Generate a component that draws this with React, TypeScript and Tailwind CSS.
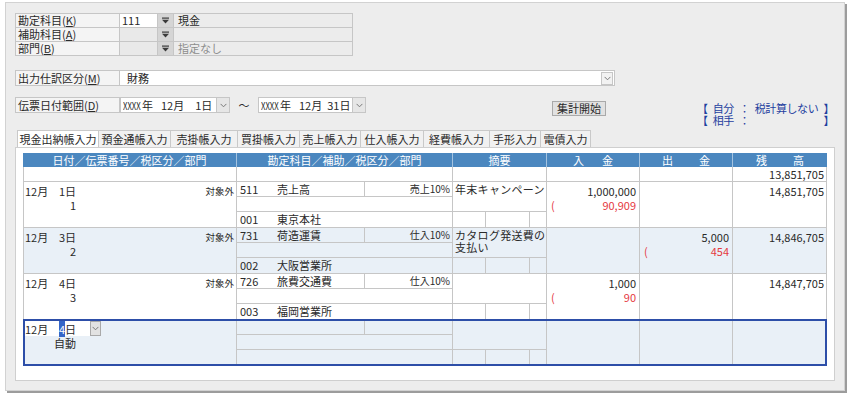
import React from "react";

const FONT = "font-['Noto_Sans_CJK_JP','Noto_Sans',sans-serif]";
const LINE = "border-[#c6c6c6]";

function BarDown() {
  return (
    <svg width="7" height="7" viewBox="0 0 7 7">
      <rect x="0" y="0.5" width="7" height="1.2" fill="#3a3a3a" />
      <path d="M0 2.8H7L3.5 6.6Z" fill="#3a3a3a" />
    </svg>
  );
}

function Chev() {
  return (
    <svg width="7" height="5" viewBox="0 0 7 5">
      <path d="M0.6 0.9L3.5 3.8L6.4 0.9" fill="none" stroke="#7a7a7a" strokeWidth="1" />
    </svg>
  );
}

function U({ c }: { c: string }) {
  return <span className="underline underline-offset-[1px]">{c}</span>;
}

function TopRow({
  label,
  code,
  codeWhite,
  name,
  grey,
  last,
}: {
  label: React.ReactNode;
  code: string;
  codeWhite?: boolean;
  name: string;
  grey?: boolean;
  last?: boolean;
}) {
  return (
    <div className={`flex ${last ? "h-[13px]" : "h-[14px] border-b"} ${LINE} leading-[13px]`}>
      <div className={`w-[104px] bg-[#f4f4f4] border-r ${LINE} pl-[2px]`}>{label}</div>
      <div className={`w-[38px] border-r ${LINE} pl-[2px] ${codeWhite ? "bg-white" : "bg-[#e9e9e9]"}`}>{code}</div>
      <div className={`w-[16px] bg-[#d5d5d5] border-r ${LINE} flex items-center justify-center`}>
        <BarDown />
      </div>
      <div className={`flex-1 bg-[#ececec] pl-[4px] ${grey ? "text-[#8c8c8c]" : ""}`}>{name}</div>
    </div>
  );
}

function DateCombo({ day, w }: { day: string; w: string }) {
  return (
    <div className="flex h-[16px]">
      <div className={`${w} h-[16px] bg-white border ${LINE} pl-[2px] leading-[14px] whitespace-nowrap flex`}>
        <span className="inline-block w-[19px] origin-left scale-x-70">XXXX</span>
        <span>年</span>
        <span className="ml-[8px]">12月</span>
        <span className={day.length > 2 ? "ml-[5px]" : "ml-[11px]"}>{day}</span>
      </div>
      <div className={`w-[13px] h-[16px] bg-[#e6e6e6] border-y border-r ${LINE} flex items-center justify-center`}>
        <Chev />
      </div>
    </div>
  );
}

const tabs: [string, number][] = [
  ["現金出納帳入力", 82],
  ["預金通帳入力", 72],
  ["売掛帳入力", 67],
  ["買掛帳入力", 62],
  ["売上帳入力", 61],
  ["仕入帳入力", 63],
  ["経費帳入力", 66],
  ["手形入力", 51],
  ["電債入力", 50],
];

function Amt({ amt, tax, w }: { amt?: string; tax?: string; w: string }) {
  return (
    <div className={`${w} border-r ${LINE} flex flex-col leading-[14px] pt-[2px]`}>
      <div className="h-[14px] text-right pr-[3px]">{amt}</div>
      {tax && (
        <div className="h-[14px] flex justify-between pl-[4px] pr-[3px] text-[#e5393f]">
          <span>(</span>
          <span>{tax}</span>
        </div>
      )}
    </div>
  );
}

type Entry = {
  bg: string;
  dateCol: React.ReactNode;
  code?: string;
  name?: string;
  tax?: string;
  subCode?: string;
  subName?: string;
  memo?: string;
  inAmt?: string;
  inTax?: string;
  outAmt?: string;
  outTax?: string;
  bal?: string;
  active?: boolean;
};

function EntryRow(e: Entry) {
  return (
    <div className={`relative flex h-[46px] border-b ${LINE} ${e.bg}`}>
      <div className={`w-[213px] border-r ${LINE} flex flex-col`}>{e.dateCol}</div>
      <div className={`w-[216px] border-r ${LINE} flex flex-col leading-[14px]`}>
        <div className={`h-[15px] flex border-b ${LINE}`}>
          <div className={`w-[128px] border-r ${LINE} flex`}>
            <span className="w-[40px] pl-[3px]">{e.code}</span>
            <span>{e.name}</span>
          </div>
          <div className="flex-1 text-right pr-[2px] text-[10px]">{e.tax}</div>
        </div>
        <div className={`h-[15px] border-b ${LINE}`} />
        <div className="flex-1 flex">
          <span className="w-[40px] pl-[3px]">{e.subCode}</span>
          <span>{e.subName}</span>
        </div>
      </div>
      <div className={`w-[94px] border-r ${LINE} flex flex-col`}>
        <div className={`h-[30px] border-b ${LINE} pl-[2px] pt-[1px] leading-[12px] tracking-[0.3px]`}>{e.memo}</div>
        <div className="flex-1 flex">
          <div className={`w-[33px] border-r ${LINE}`} />
          <div className={`w-[44px] border-r ${LINE}`} />
          <div className="flex-1" />
        </div>
      </div>
      <Amt w="w-[93px]" amt={e.inAmt} tax={e.inTax} />
      <Amt w="w-[93px]" amt={e.outAmt} tax={e.outTax} />
      <div className="flex-1 text-right pr-[2px] leading-[14px] pt-[2px]">{e.bal}</div>
      {e.active && (
        <div className="absolute left-[-1px] right-[-1px] top-[-1px] bottom-[-1px] border-2 border-[#2d4ea8] pointer-events-none" />
      )}
    </div>
  );
}

function DateCol({ day, no, kubun }: { day: string; no: string; kubun: string }) {
  return (
    <div className="flex flex-col leading-[14px] pt-[2px]">
      <div className="flex h-[14px]">
        <span className="w-[30px] pl-[1px]">12月</span>
        <span className="w-[22px] text-right">{day}</span>
        <span className="flex-1 text-right pr-[2px] text-[9.5px]">{kubun}</span>
      </div>
      <div className="flex h-[14px]">
        <span className="w-[52px] text-right">{no}</span>
      </div>
    </div>
  );
}

function ActiveDateCol() {
  return (
    <div className="flex flex-col leading-[14px]">
      <div className="flex h-[16px] pt-[1px]">
        <div className="w-[66px] bg-white flex pt-[1px]">
          <span className="w-[30px] pl-[1px]">12月</span>
          <span className="w-[22px] text-right">
            <span className="bg-[#3566c8] text-white">4</span>日
          </span>
        </div>
        <div className="w-[11px] h-[15px] bg-[#e2e2e2] border border-[#a9a9a9] flex items-center justify-center">
          <Chev />
        </div>
      </div>
      <div className="flex h-[14px]">
        <span className="w-[52px] text-right">自動</span>
      </div>
    </div>
  );
}

export default function App() {
  return (
    <div className={`w-[850px] h-[398px] bg-white text-[11px] text-[#2a2a2a] ${FONT}`}>
      <div className="ml-[5px] mt-[2px] w-[840px] h-[389px] bg-[#ededed] border border-[#d2d2d2] shadow-[2px_2px_0_#9c9c9c] pl-[9px] pt-[10px] flex flex-col">
        {/* account block */}
        <div className={`w-[338px] border ${LINE} flex flex-col`}>
          <TopRow label={<>勘定科目(<U c="K" />)</>} code="111" codeWhite name="現金" />
          <TopRow label={<>補助科目(<U c="A" />)</>} code="" name="" />
          <TopRow label={<>部門(<U c="B" />)</>} code="" name="指定なし" grey last />
        </div>

        {/* 出力仕訳区分 */}
        <div className="flex h-[16px] mt-[14px] leading-[14px]">
          <div className={`w-[105px] h-[16px] bg-[#f4f4f4] border ${LINE} pl-[2px]`}>
            出力仕訳区分(<U c="M" />)
          </div>
          <div className={`w-[495px] h-[16px] bg-white border-y border-r ${LINE} flex items-center`}>
            <span className="pl-[7px] flex-1">財務</span>
            <div className={`w-[12px] h-[13px] mr-[1px] border ${LINE} bg-[#f2f2f2] flex items-center justify-center`}>
              <Chev />
            </div>
          </div>
        </div>

        {/* 伝票日付範囲 */}
        <div className="flex items-start h-[33px] mt-[11px]">
          <div className={`w-[105px] h-[16px] bg-[#f4f4f4] border ${LINE} pl-[2px] leading-[14px]`}>
            伝票日付範囲(<U c="D" />)
          </div>
          <DateCombo day="1日" w="w-[97px]" />
          <span className="w-[28px] text-center leading-[16px]">～</span>
          <DateCombo day="31日" w="w-[95px]" />
          <button className="ml-[186px] mt-[4px] w-[54px] h-[15px] bg-[#e1e1e1] border border-[#a9a9a9] leading-[13px] text-center text-[11px]">
            集計開始
          </button>
          <p className="ml-[91px] mt-[5px] text-[#1f3f9f] text-[11px] leading-[12px] tracking-[-0.4px] whitespace-pre">
            {"【\u2002自分\u2002：\u2002税計算しない\u2002】\n【\u2002相手\u2002：\u2002　　　　　　\u2002】"}
          </p>
        </div>

        {/* tabs */}
        <div className="flex h-[17px] ml-[2px]">
          {tabs.map(([t, w], i) => (
            <div
              key={t}
              style={{ width: w }}
              className={`h-[17px] border-t border-r ${i === 0 ? "border-l bg-white" : "bg-[#f1f1f1]"} border-[#c9c9c9] text-center leading-[16px] whitespace-nowrap`}
            >
              {t}
            </div>
          ))}
        </div>

        {/* panel */}
        <div className="w-[820px] h-[234px] bg-white border border-[#cfcfcf] pl-[7px] pt-[5px]">
          <div className="w-[804px]">
            {/* header */}
            <div className="flex h-[14px] bg-[#4b87bf] text-white leading-[14px]">
              <div className="w-[214px] border-r border-[#a4c3e0] text-center">日付／伝票番号／税区分／部門</div>
              <div className="w-[216px] border-r border-[#a4c3e0] text-center">勘定科目／補助／税区分／部門</div>
              <div className="w-[94px] border-r border-[#a4c3e0] text-center">摘要</div>
              <div className="w-[93px] border-r border-[#a4c3e0] flex justify-center gap-[18px]">
                <span>入</span>
                <span>金</span>
              </div>
              <div className="w-[93px] border-r border-[#a4c3e0] flex justify-center gap-[26px]">
                <span>出</span>
                <span>金</span>
              </div>
              <div className="flex-1 flex justify-center gap-[26px]">
                <span>残</span>
                <span>高</span>
              </div>
            </div>
            <div className={`border-x ${LINE}`}>
              {/* carry row */}
              <div className={`flex h-[15px] border-b ${LINE} leading-[14px]`}>
                <div className={`w-[213px] border-r ${LINE}`} />
                <div className={`w-[216px] border-r ${LINE}`} />
                <div className={`w-[94px] border-r ${LINE}`} />
                <div className={`w-[93px] border-r ${LINE}`} />
                <div className={`w-[93px] border-r ${LINE}`} />
                <div className="flex-1 text-right pr-[2px]">13,851,705</div>
              </div>
              <EntryRow
                bg="bg-white"
                dateCol={<DateCol day="1日" no="1" kubun="対象外" />}
                code="511"
                name="売上高"
                tax="売上10%"
                subCode="001"
                subName="東京本社"
                memo="年末キャンペーン"
                inAmt="1,000,000"
                inTax="90,909"
                bal="14,851,705"
              />
              <EntryRow
                bg="bg-[#e9f0f7]"
                dateCol={<DateCol day="3日" no="2" kubun="対象外" />}
                code="731"
                name="荷造運賃"
                tax="仕入10%"
                subCode="002"
                subName="大阪営業所"
                memo="カタログ発送費の支払い"
                outAmt="5,000"
                outTax="454"
                bal="14,846,705"
              />
              <EntryRow
                bg="bg-white"
                dateCol={<DateCol day="4日" no="3" kubun="対象外" />}
                code="726"
                name="旅費交通費"
                tax="仕入10%"
                subCode="003"
                subName="福岡営業所"
                memo=""
                inAmt="1,000"
                inTax="90"
                bal="14,847,705"
              />
              <EntryRow bg="bg-[#e9f0f7]" dateCol={<ActiveDateCol />} active />
            </div>
          </div>
        </div>
      </div>
    </div>
  );
}
